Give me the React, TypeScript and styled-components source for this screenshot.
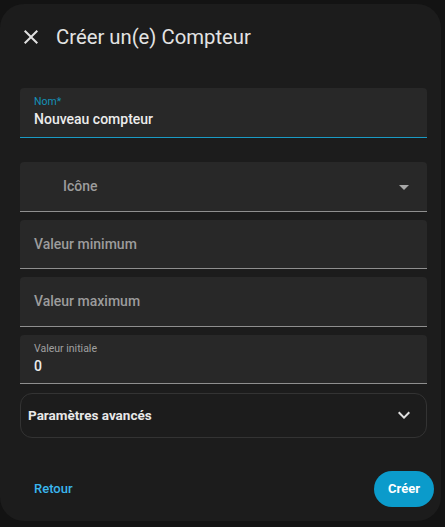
import styled, { createGlobalStyle } from 'styled-components';

const GlobalStyle = createGlobalStyle`
  body {
    margin: 0;
    background: #131313;
    font-family: Roboto, "Liberation Sans", sans-serif;
  }
`;

const Dialog = styled.div`
  box-sizing: border-box;
  margin-top: 4px;
  width: 441px;
  height: 517px;
  background: #1c1c1c;
  border-radius: 24px;
  display: flex;
  flex-direction: column;
`;

const Header = styled.div`
  display: flex;
  align-items: center;
  height: 66px;
  padding-left: 19px;
  gap: 13px;
`;

const Title = styled.h2`
  margin: 0;
  font-size: 20.3px;
  font-weight: 400;
  color: #e3e3e3;
`;

const Content = styled.div`
  display: flex;
  flex-direction: column;
  padding: 18px 14px 0 20px;
`;

const Field = styled.div<{ $focused?: boolean; $mt?: number }>`
  box-sizing: border-box;
  position: relative;
  height: 49.5px;
  margin-top: ${(p) => p.$mt ?? 8}px;
  background: #282828;
  border-radius: 4px 4px 0 0;
  border-bottom: 1px solid ${(p) => (p.$focused ? '#1a9ac4' : '#8f8f8f')};
  display: flex;
  flex-direction: column;
  justify-content: center;
  padding: 0 14px;
`;

const Label = styled.span<{ $color?: string }>`
  font-size: 10.5px;
  color: ${(p) => p.$color ?? '#a0a0a0'};
  line-height: 12px;
`;

const Value = styled.span`
  font-size: 14px;
  font-weight: 500;
  color: #ececec;
  line-height: 18px;
  margin-top: 2px;
`;

const Placeholder = styled.span<{ $indent?: number }>`
  font-size: 14px;
  font-weight: 500;
  color: #9c9c9c;
  padding-left: ${(p) => p.$indent ?? 0}px;
`;

const Caret = styled.svg`
  position: absolute;
  right: 11px;
  top: 13px;
`;

const Advanced = styled.div`
  box-sizing: border-box;
  margin-top: 8.5px;
  height: 45px;
  border: 1px solid #333333;
  border-radius: 12px;
  display: flex;
  align-items: center;
  justify-content: space-between;
  padding: 0 10px 0 7px;
`;

const AdvancedText = styled.span`
  font-size: 13.5px;
  font-weight: 700;
  color: #e8e8e8;
`;

const Footer = styled.div`
  display: flex;
  align-items: center;
  justify-content: space-between;
  margin-top: 33px;
  padding: 0 7px 0 20px;
`;

const TextButton = styled.button`
  background: none;
  border: none;
  padding: 8px 14px;
  font-family: inherit;
  font-size: 13px;
  font-weight: 500;
  color: #3ab6ee;
  cursor: pointer;
`;

const PrimaryButton = styled.button`
  height: 36px;
  width: 60px;
  border: none;
  border-radius: 18px;
  background: #0b9bcb;
  color: #ffffff;
  font-family: inherit;
  font-size: 13px;
  font-weight: 700;
  cursor: pointer;
`;

export default function App() {
  return (
    <>
      <GlobalStyle />
      <Dialog>
        <Header>
          <svg width="24" height="24" viewBox="0 0 24 24">
            <path
              fill="#e0e0e0"
              d="M19,6.41L17.59,5L12,10.59L6.41,5L5,6.41L10.59,12L5,17.59L6.41,19L12,13.41L17.59,19L19,17.59L13.41,12L19,6.41Z"
            />
          </svg>
          <Title>Créer un(e) Compteur</Title>
        </Header>
        <Content>
          <Field $focused $mt={0}>
            <Label $color="#1591b8">Nom*</Label>
            <Value>Nouveau compteur</Value>
          </Field>
          <Field $mt={24.5}>
            <Placeholder $indent={29}>Icône</Placeholder>
            <Caret width="24" height="24" viewBox="0 0 24 24">
              <path fill="#a8a8a8" d="M7,10L12,15L17,10H7Z" />
            </Caret>
          </Field>
          <Field>
            <Placeholder>Valeur minimum</Placeholder>
          </Field>
          <Field>
            <Placeholder>Valeur maximum</Placeholder>
          </Field>
          <Field>
            <Label>Valeur initiale</Label>
            <Value>0</Value>
          </Field>
          <Advanced>
            <AdvancedText>Paramètres avancés</AdvancedText>
            <svg width="24" height="24" viewBox="0 0 24 24">
              <path
                fill="#e0e0e0"
                d="M7.41,8.58L12,13.17L16.59,8.58L18,10L12,16L6,10L7.41,8.58Z"
              />
            </svg>
          </Advanced>
        </Content>
        <Footer>
          <TextButton>Retour</TextButton>
          <PrimaryButton>Créer</PrimaryButton>
        </Footer>
      </Dialog>
    </>
  );
}
